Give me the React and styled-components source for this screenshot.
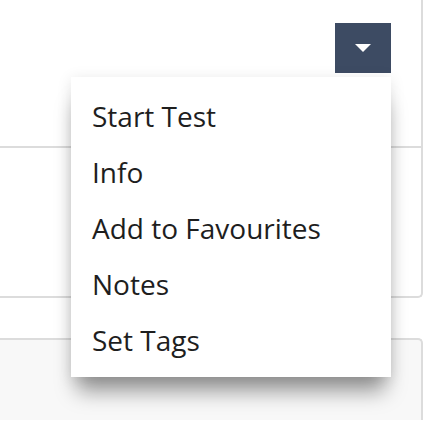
import React from "react";
import styled, { createGlobalStyle } from "styled-components";

const Global = createGlobalStyle`
  html, body { margin: 0; padding: 0; background: #fff; }
  body { font-family: "Open Sans", "Noto Sans", sans-serif; overflow: hidden; }
`;

const Page = styled.div`
  width: 424px;
  height: 426px;
  position: relative;
  overflow: hidden;
`;

const List = styled.div`
  margin-left: -10px;
  width: 433px;
  display: flex;
  flex-direction: column;
  gap: 40px;
`;

const Card = styled.div`
  border: 2px solid #dcdcdc;
  border-top: none;
  border-radius: 0 0 5px 0;
  background: #fff;
`;

const CardHeader = styled.div`
  border-bottom: 2px solid #dcdcdc;
  display: flex;
  justify-content: flex-end;
  align-items: flex-start;
  padding: 23px 30px 0 0;
  box-sizing: border-box;
  height: 148px;
`;

const CardBody = styled.div`
  height: 148px;
`;

const GreyCard = styled.div`
  height: 80px;
  background: #f8f8f8;
  border: 2px solid #dcdcdc;
  border-bottom: none;
  border-radius: 0 5px 0 0;
`;

const DropWrap = styled.div`
  position: relative;
  z-index: 5;
`;

const ToggleButton = styled.button`
  width: 56px;
  height: 50px;
  border: none;
  padding: 0;
  margin: 0;
  background: #3d4b63;
  display: flex;
  align-items: center;
  justify-content: center;
  cursor: pointer;
`;

const Menu = styled.ul`
  position: absolute;
  top: 54px;
  right: 0;
  width: 320px;
  margin: 0;
  padding: 11px 0 9px;
  list-style: none;
  background: #fff;
  box-shadow: 0 20px 20px -6px rgba(0, 0, 0, 0.4), 0 2px 14px rgba(0, 0, 0, 0.1);
`;

const MenuItem = styled.li`
  height: 56px;
  display: flex;
  align-items: center;
  padding-left: 21px;
  font-size: 28px;
  color: #1e1e1e;
  line-height: 1;
`;

const items = ["Start Test", "Info", "Add to Favourites", "Notes", "Set Tags"];

export default function App() {
  return (
    <Page>
      <Global />
      <List>
        <Card>
          <CardHeader>
            <DropWrap>
              <ToggleButton aria-label="Open menu">
                <svg width="16" height="8" viewBox="0 0 16 8">
                  <path d="M0 0 H16 L8 8 Z" fill="#fff" />
                </svg>
              </ToggleButton>
              <Menu>
                {items.map((t) => (
                  <MenuItem key={t}>{t}</MenuItem>
                ))}
              </Menu>
            </DropWrap>
          </CardHeader>
          <CardBody />
        </Card>
        <GreyCard />
      </List>
    </Page>
  );
}
